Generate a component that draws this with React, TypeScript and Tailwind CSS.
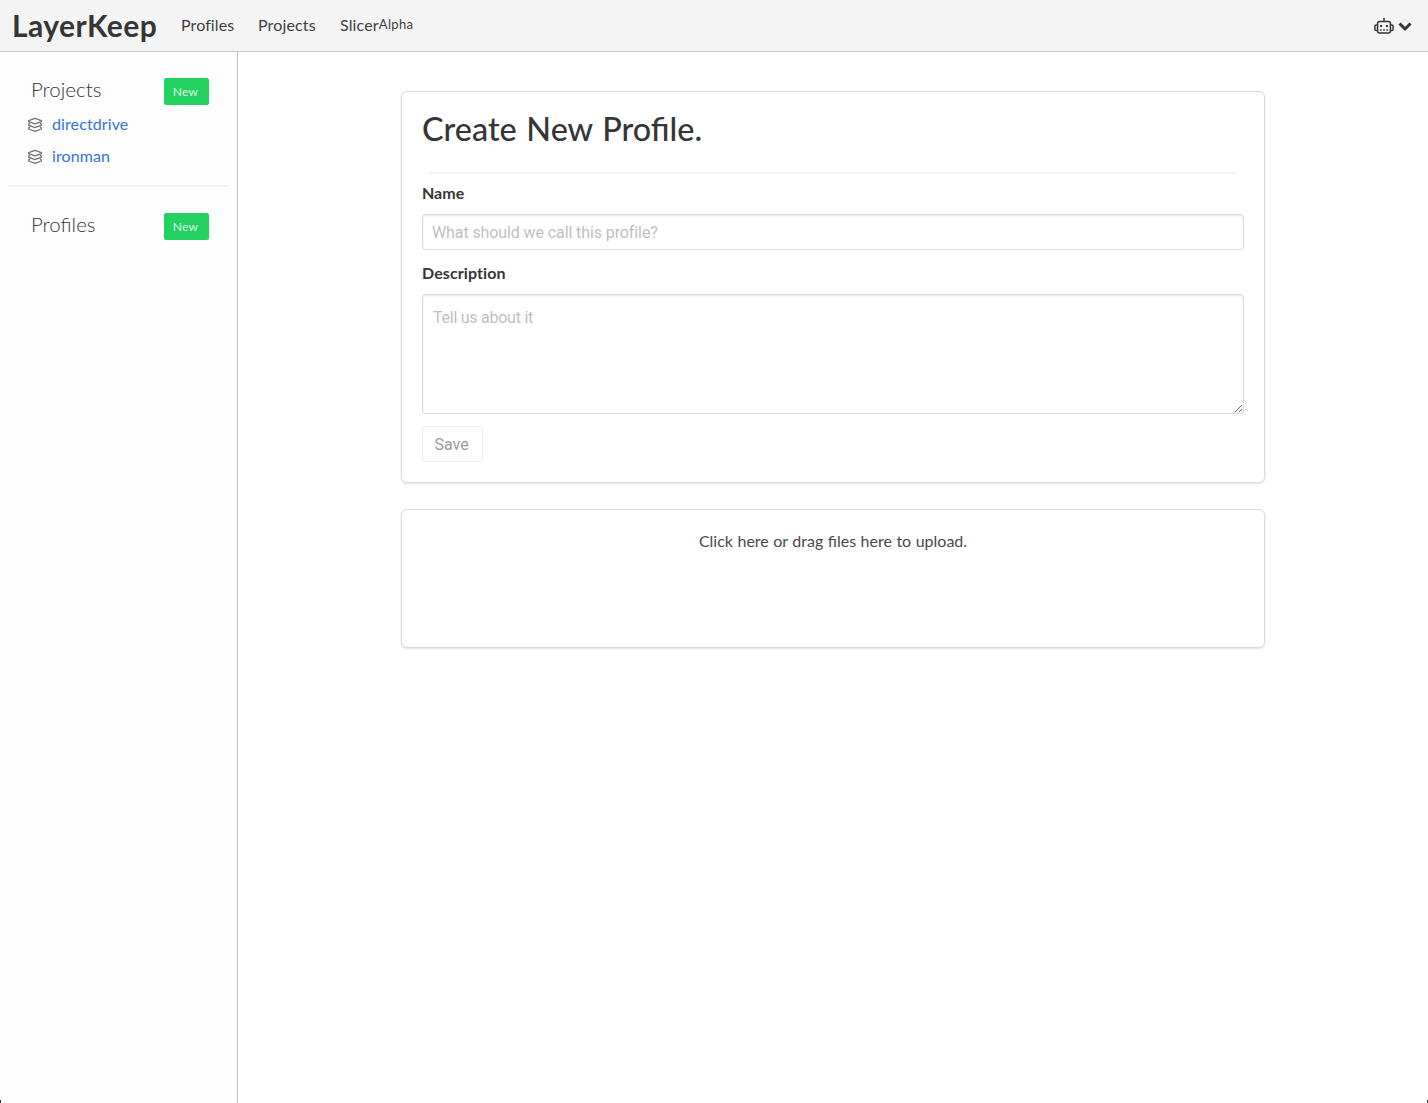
import React from "react";

function Layers() {
  return (
    <svg width="16" height="16" viewBox="0 0 16 16" fill="none" stroke="#757575" strokeWidth="1.3" strokeLinejoin="round" className="shrink-0">
      <path d="M8 1.4 14.4 3.6V4.6L8 6.9 1.6 4.6V3.6Z" />
      <path d="M3 6 1.6 7.2V8.2L8 10.6 14.4 8.2V7.2L13 6" />
      <path d="M3 9.8 1.6 11V12L8 14.4 14.4 12V11L13 9.8" />
    </svg>
  );
}

function Robot() {
  return (
    <svg width="20" height="18" viewBox="0 0 20 18" fill="none" stroke="#363636" strokeWidth="1.5">
      <path d="M10 1v3.5" />
      <rect x="3.6" y="4.6" width="12.8" height="11.4" rx="2" />
      <path d="M3.4 8H2.2Q.9 8 .9 9.3v3Q.9 13.6 2.2 13.6h1.2M16.6 8h1.2q1.3 0 1.3 1.3v3q0 1.3-1.3 1.3h-1.2" />
      <path d="M6 9h2M12 9h2" strokeWidth="2" />
      <path d="M6 13h1.6M9.2 13h1.6M12.4 13h1.6" strokeWidth="1.4" />
    </svg>
  );
}

function SideHeading({ label }: { label: string }) {
  return (
    <div className="flex h-[27px] items-center justify-between pl-[31px] pr-7">
      <h2 className="-mt-[5px] text-[20.5px] leading-6 font-light"><span>{label}</span></h2>
      <button className="h-[27px] w-[45px] rounded-[2px] bg-[#23d160] pr-0.5 pt-px text-[12px] tracking-[.3px] text-white/85">New</button>
    </div>
  );
}

function ProjectLink({ name }: { name: string }) {
  return (
    <a className="flex h-8 items-center gap-[9px] pl-[27px] text-[16px] text-[#3273dc]">
      <Layers />
      <span className="-mt-0.5 tracking-[.1px]">{name}</span>
    </a>
  );
}

const card = "rounded-[6px] border border-[#dbdbdb] bg-white shadow-[0_1px_2px_rgba(0,0,0,.12)]";
const field = "block w-full rounded-[3px] border border-[#dbdbdb] bg-white font-['Roboto',sans-serif] text-[16px] shadow-[inset_0_1px_2px_rgba(10,10,10,.1)] outline-none placeholder:text-[#bfbfbf]";

export default function App() {
  return (
    <div className="flex h-[1103px] flex-col overflow-hidden bg-white font-['Lato',sans-serif] text-[#363636]">
      <header className="flex h-[52px] shrink-0 items-center border-b border-[#c4c4c4] bg-[#f4f4f4] pl-3 pr-4">
        <div className="-mt-0.5 w-[169px] text-[30px] leading-10 font-bold tracking-[.45px]"><span>LayerKeep</span></div>
        <nav className="-mt-0.5 flex flex-1 text-[16px] leading-6 text-[#404040]">
          <a className="w-[77px] tracking-[.1px] [font-variant-ligatures:common-ligatures]"><span>Profiles</span></a>
          <a className="w-[82px] tracking-[.15px]"><span>Projects</span></a>
          <a className="flex"><span className="tracking-[.15px]">Slicer</span><span className="-mt-px text-[13px] tracking-[.35px]">Alpha</span></a>
        </nav>
        <div className="flex items-center gap-1">
          <Robot />
          <svg width="14" height="14" viewBox="0 0 14 14" fill="none" className="-mt-0.5">
            <path d="M2 5.5 7 .8l5 4.7" stroke="#dedede" strokeWidth=".8" />
            <path d="m1.5 5.5 5.5 5.5 5.5-5.5" stroke="#363636" strokeWidth="3" />
          </svg>
        </div>
      </header>
      <div className="flex min-h-0 flex-1">
        <aside className="w-[238px] shrink-0 border-r border-[#c4c4c4] bg-[#fdfdfd] pt-[26px]">
          <SideHeading label="Projects" />
          <div className="mt-1">
            <ProjectLink name="directdrive" />
            <ProjectLink name="ironman" />
          </div>
          <hr className="mx-2 mt-3 h-0.5 border-0 bg-[#f3f3f3]" />
          <div className="h-[26px]" />
          <SideHeading label="Profiles" />
        </aside>
        <main className="flex flex-1 flex-col items-center pt-[39px]">
          <section className={`${card} h-[392px] w-[864px] px-5`}>
            <h1 className="mt-[17px] text-[32.4px] leading-10 font-medium [word-spacing:1.5px]"><span>Create New Profile.</span></h1>
            <hr className="mx-2 mt-[23px] h-0.5 border-0 bg-[#f3f3f3]" />
            <label className="mt-[7px] block text-[16px] leading-6 font-bold"><span>Name</span></label>
            <input className={`${field} mt-[9px] h-9 px-[9px] tracking-[-.1px]`} placeholder="What should we call this profile?" />
            <label className="mt-[11px] block text-[16px] leading-6 font-bold tracking-[.1px]"><span>Description</span></label>
            <textarea className={`${field} mt-[9px] h-[120px] resize-y px-[10px] pt-[11px] pb-[9px] leading-6 tracking-[-.25px]`} placeholder="Tell us about it" />
            <button className="mt-3 h-9 w-[61px] rounded-[3px] border border-[#ededed] pr-0.5 pt-0.5 font-['Roboto',sans-serif] text-[16px] text-[#9b9b9b]">Save</button>
          </section>
          <section className={`${card} mt-[26px] h-[139px] w-[864px] pt-[19px] text-center text-[16px] leading-6 text-[#4a4a4a] [word-spacing:.4px]`}>
            <span>Click here or drag files here to upload.</span>
          </section>
        </main>
      </div>
      <i className="fixed bottom-0 left-0 h-[3px] w-px bg-[#333]" />
      <i className="fixed right-0 bottom-0 h-[3px] w-px bg-[#333]" />
    </div>
  );
}
